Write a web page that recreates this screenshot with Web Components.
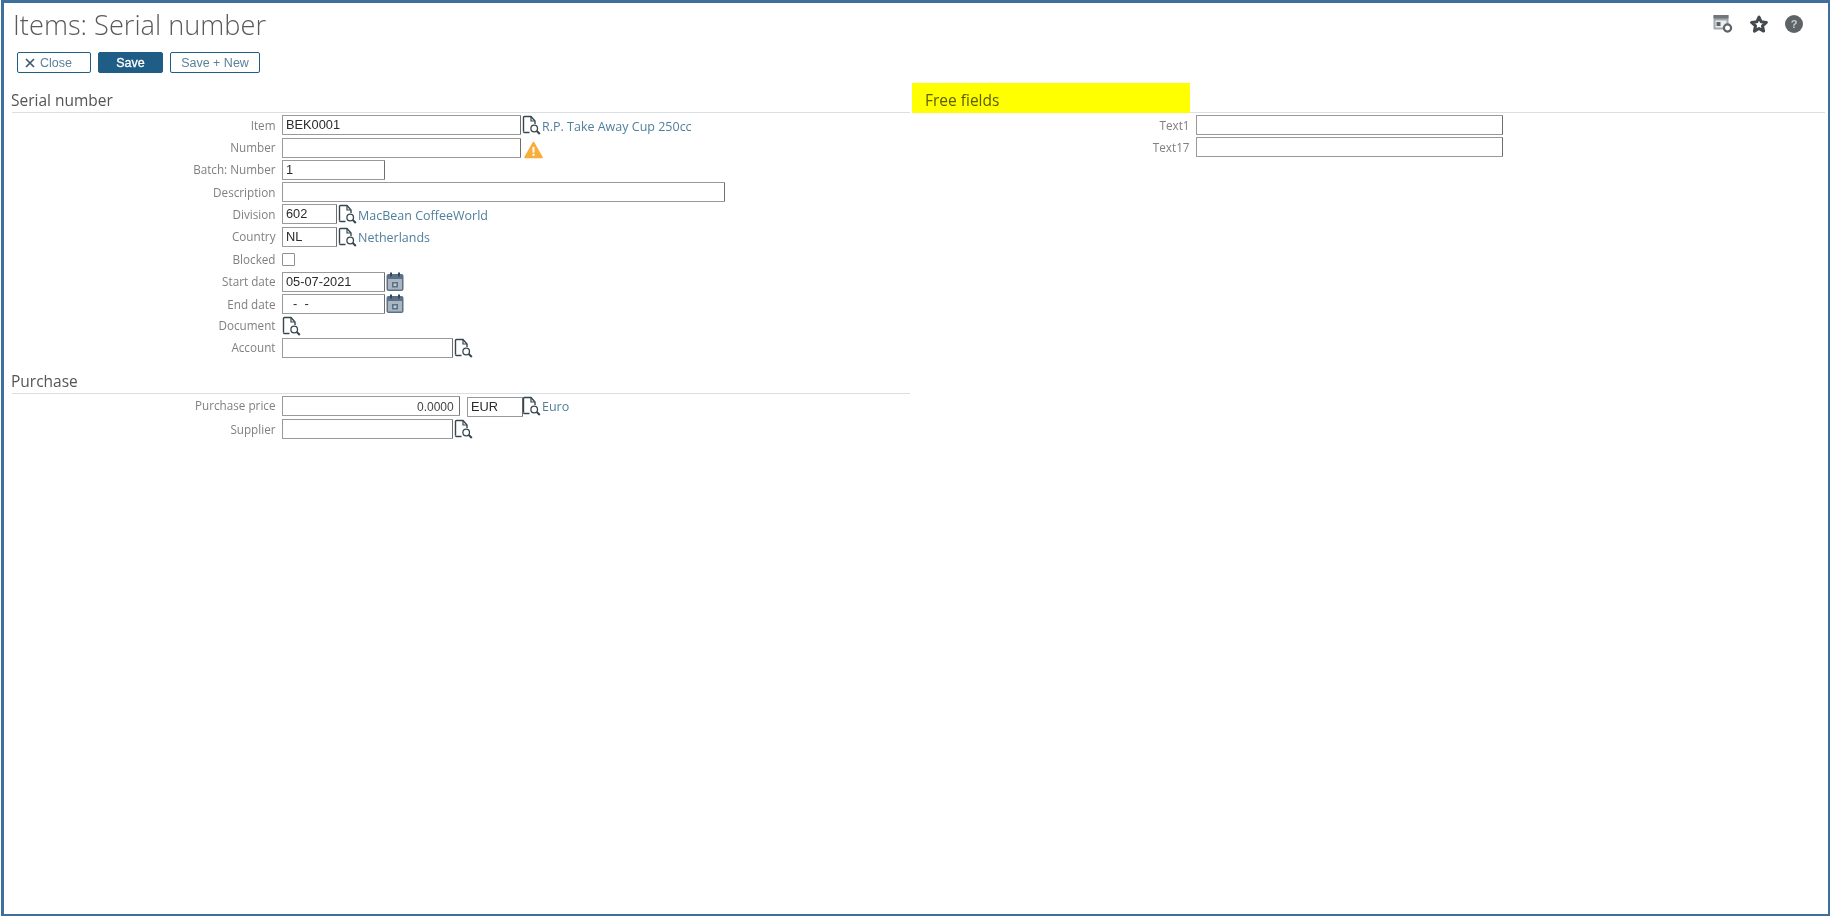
<!DOCTYPE html>
<html>
<head>
<meta charset="utf-8">
<title>Items: Serial number</title>
<style>
    html, body { margin: 0; padding: 0; background: #fff; height: 100%; overflow: hidden; }
    body { font-family: "Open Sans", sans-serif; }
</style>
</head>
<body>
<template id="lookup-tpl">
    <style>:host { display: inline-flex; width: 19px; height: 20px; flex: none; }</style>
    <svg width="19" height="20" viewBox="0 0 19 20" fill="none" stroke="#37474f" stroke-width="1.4">
        <path d="M1.5 16.5V2.5q0-1 1-1h6.5l4 4.5v3"/>
        <path d="M9 1.5v4.5h4" stroke-width="1.2"/>
        <path d="M1.5 16.5q0 1 1 1h5"/>
        <circle cx="12.2" cy="13.5" r="3.3" stroke-width="1.3"/>
        <path d="M14.8 16l3 3" stroke-width="2"/>
    </svg>
</template>
<template id="calendar-tpl">
    <style>:host { display: inline-flex; width: 18px; height: 20px; flex: none; }</style>
    <svg width="18" height="20" viewBox="0 0 18 20">
        <rect x="0.5" y="2" width="17" height="17" rx="2" fill="#5b7186"/>
        <rect x="2" y="7" width="14" height="10.5" fill="#a9b6c2"/>
        <rect x="4" y="0.5" width="2" height="4" fill="#33495e"/>
        <rect x="12" y="0.5" width="2" height="4" fill="#33495e"/>
        <rect x="6" y="10" width="6" height="5.5" fill="#5b7186"/>
        <rect x="7.6" y="11.5" width="2.8" height="2.5" fill="#c4ced6"/>
    </svg>
</template>

<serial-page></serial-page>

<script>
class LookupIcon extends HTMLElement {
    constructor() {
        super();
        this.attachShadow({ mode: 'open' });
        this.shadowRoot.appendChild(document.getElementById('lookup-tpl').content.cloneNode(true));
    }
}
customElements.define('lookup-icon', LookupIcon);

class CalendarIcon extends HTMLElement {
    constructor() {
        super();
        this.attachShadow({ mode: 'open' });
        this.shadowRoot.appendChild(document.getElementById('calendar-tpl').content.cloneNode(true));
    }
}
customElements.define('calendar-icon', CalendarIcon);

class WarningIcon extends HTMLElement {
    constructor() {
        super();
        this.attachShadow({ mode: 'open' }).innerHTML = `
            <style>:host { display: inline-flex; width: 19px; height: 18px; flex: none; margin: 4px 0 0 2px; }</style>
            <svg width="19" height="18" viewBox="0 0 19 18">
                <path d="M9.5 1.5L18 16.5H1z" fill="#f9ae3c" stroke="#f9ae3c" stroke-width="1.6" stroke-linejoin="round"/>
                <rect x="8.5" y="6" width="2" height="5.6" fill="#fff"/>
                <rect x="8.5" y="12.8" width="2" height="2" fill="#fff"/>
            </svg>`;
    }
}
customElements.define('warning-icon', WarningIcon);

class ErpButton extends HTMLElement {
    constructor() {
        super();
        this.attachShadow({ mode: 'open' }).innerHTML = `
            <style>
                :host {
                    display: inline-flex;
                    align-items: center;
                    justify-content: center;
                    box-sizing: border-box;
                    height: 21px;
                    border: 1px solid #1f5d86;
                    border-radius: 2px;
                    font: 12.5px "Liberation Sans", Arial, sans-serif;
                    color: #5d8199;
                    background: #fff;
                }
                :host([primary]) { background: #1f5d86; color: #fff; -webkit-text-stroke: 0.3px #fff; }
                :host([close]) { justify-content: flex-start; padding-left: 7px; gap: 5px; }
                svg { display: none; }
                :host([close]) svg { display: block; }
            </style>
            <svg width="10" height="10" viewBox="0 0 10 10"><path d="M1 1l8 8M9 1l-8 8" stroke="#3d5a70" stroke-width="1.7"/></svg>
            <slot></slot>`;
    }
}
customElements.define('erp-button', ErpButton);

class SectionHeader extends HTMLElement {
    constructor() {
        super();
        this.attachShadow({ mode: 'open' }).innerHTML = `
            <style>
                :host {
                    display: block;
                    box-sizing: border-box;
                    height: 30px;
                    padding-top: 6px;
                    border-bottom: 1px solid #dcdfe1;
                    font: 15.5px/22px "Open Sans", sans-serif;
                    color: #555;
                }
                .mark { display: block; margin-left: -1px; }
                :host([mark]) { padding-top: 0; }
                :host([mark]) .mark {
                    background: #ffff00;
                    width: 278px;
                    height: 30px;
                    margin: 0;
                    padding: 6px 0 0 13px;
                    box-sizing: border-box;
                    color: #5c5c00;
                }
            </style>
            <span class="mark"><slot></slot></span>`;
    }
}
customElements.define('section-header', SectionHeader);

class FormField extends HTMLElement {
    constructor() {
        super();
        this.attachShadow({ mode: 'open' }).innerHTML = `
            <style>
                :host {
                    display: grid;
                    grid-template-columns: var(--label-col, 263.5px) 1fr;
                    column-gap: 6.5px;
                    align-items: center;
                    height: 22.25px;
                }
                .label {
                    text-align: right;
                    font: 11.7px "Open Sans", sans-serif;
                    color: #808080;
                    white-space: nowrap;
                    margin-top: -1px;
                }
                .value { display: flex; align-items: center; gap: 1px; height: 100%; }
            </style>
            <div class="label"></div>
            <div class="value"><slot></slot></div>`;
    }
    connectedCallback() {
        this.shadowRoot.querySelector('.label').textContent = this.getAttribute('label');
    }
}
customElements.define('form-field', FormField);

class TextBox extends HTMLElement {
    constructor() {
        super();
        this.attachShadow({ mode: 'open' }).innerHTML = `
            <style>
                :host {
                    display: block;
                    box-sizing: border-box;
                    height: 20px;
                    padding: 0 3px;
                    flex: none;
                    border: 1px solid #999;
                    border-right-color: #6e6e6e;
                    border-radius: 1px;
                    font: 12.8px/18px "Liberation Sans", Arial, sans-serif;
                    color: #2b2b2b;
                    background: #fff;
                }
                :host([right]) { text-align: right; padding-right: 2px; font-size: 12px; line-height: 20px; color: #444; }
                slot { white-space: pre; }
            </style>
            <slot></slot>`;
    }
    connectedCallback() {
        this.style.width = this.getAttribute('w') + 'px';
    }
}
customElements.define('text-box', TextBox);

class CheckBox extends HTMLElement {
    constructor() {
        super();
        this.attachShadow({ mode: 'open' }).innerHTML = `
            <style>
                :host {
                    display: block;
                    box-sizing: border-box;
                    width: 13px;
                    height: 13px;
                    border: 1px solid #8f8f8f;
                    border-radius: 1px;
                    background: #fff;
                }
            </style>`;
    }
}
customElements.define('check-box', CheckBox);

class LinkText extends HTMLElement {
    constructor() {
        super();
        this.attachShadow({ mode: 'open' }).innerHTML = `
            <style>
                :host { display: inline-block; margin-top: 2px; font: 12.5px "Open Sans", sans-serif; color: #4f7f9b; white-space: nowrap; }
            </style>
            <slot></slot>`;
    }
}
customElements.define('link-text', LinkText);

class PageIcons extends HTMLElement {
    constructor() {
        super();
        this.attachShadow({ mode: 'open' }).innerHTML = `
            <style>
                :host { display: flex; align-items: center; gap: 17px; }
                svg { display: block; }
            </style>
            <svg width="20" height="20" viewBox="0 0 20 20">
                <rect x="0.5" y="1" width="15" height="14.5" rx="1" fill="#a3a9ae"/>
                <rect x="0.5" y="1" width="15" height="3.5" fill="#70777d"/>
                <rect x="2.5" y="6.5" width="11" height="7" fill="#eceeef"/>
                <rect x="3.5" y="8" width="4" height="4" fill="#5d6367"/>
                <circle cx="14.5" cy="14" r="3.6" fill="#fff" stroke="#5d6367" stroke-width="2.2"/>
            </svg>
            <svg width="18" height="18" viewBox="0 0 18 18">
                <path d="M9 2l2.2 4.8 5.2.6-3.9 3.5 1.1 5.2L9 13.5l-4.6 2.6 1.1-5.2-3.9-3.5 5.2-.6z" fill="#fff" stroke="#45494d" stroke-width="3" stroke-linejoin="round"/>
            </svg>
            <svg width="18" height="18" viewBox="0 0 18 18">
                <circle cx="9" cy="9" r="9" fill="#5e6366"/>
                <text x="9" y="13" text-anchor="middle" font-family="Liberation Sans, Arial, sans-serif" font-weight="700" font-size="11" fill="#c9cccd">?</text>
            </svg>`;
    }
}
customElements.define('page-icons', PageIcons);

class SerialPage extends HTMLElement {
    constructor() {
        super();
        this.attachShadow({ mode: 'open' }).innerHTML = `
            <style>
                :host {
                    display: block;
                    box-sizing: border-box;
                    width: 1829px;
                    height: 916px;
                    margin-left: 1px;
                    border: solid #3f6f9d;
                    border-width: 3px 2px 2px 3px;
                    background: #fff;
                    filter: blur(0.4px);
                }
                header {
                    display: flex;
                    justify-content: space-between;
                    height: 46px;
                    padding: 0 25px 0 9px;
                }
                h1 {
                    margin: 0;
                    font: 300 27.2px/44px "Open Sans", sans-serif;
                    color: #5a5a5a;
                }
                page-icons { margin-top: 11px; height: 20px; }
                .toolbar { display: flex; gap: 7px; padding-left: 13px; height: 34px; align-items: flex-start; padding-top: 3px; box-sizing: border-box; }
                .close { width: 74px; }
                .save { width: 65px; }
                .savenew { width: 90px; }
                .columns { display: grid; grid-template-columns: 898px 913px; column-gap: 2px; padding-left: 8px; }
                .right { --label-col: 277.5px; }
                .rows { padding-top: 1px; }
                .first { padding-top: 1.3px; }
                .purchase { margin-top: 5px; }
                .blocked { height: 23px; }
                .document { height: 21.25px; }
                .supplier { margin-top: 1px; }
                .eur { margin-top: 2px; }
                .eur-lookup { margin-left: -2px; }
            </style>
            <header>
                <h1>Items: Serial number</h1>
                <page-icons></page-icons>
            </header>
            <div class="toolbar">
                <erp-button class="close" close>Close</erp-button>
                <erp-button class="save" primary>Save</erp-button>
                <erp-button class="savenew">Save + New</erp-button>
            </div>
            <div class="columns">
                <div class="left">
                    <section-header>Serial number</section-header>
                    <div class="rows first">
                        <form-field label="Item"><text-box w="239">BEK0001</text-box><lookup-icon></lookup-icon><link-text>R.P. Take Away Cup 250cc</link-text></form-field>
                        <form-field label="Number"><text-box w="239"></text-box><warning-icon></warning-icon></form-field>
                        <form-field label="Batch: Number"><text-box w="103">1</text-box></form-field>
                        <form-field label="Description"><text-box w="443"></text-box></form-field>
                        <form-field label="Division"><text-box w="55">602</text-box><lookup-icon></lookup-icon><link-text>MacBean CoffeeWorld</link-text></form-field>
                        <form-field label="Country"><text-box w="55">NL</text-box><lookup-icon></lookup-icon><link-text>Netherlands</link-text></form-field>
                        <form-field class="blocked" label="Blocked"><check-box></check-box></form-field>
                        <form-field label="Start date"><text-box w="103">05-07-2021</text-box><calendar-icon></calendar-icon></form-field>
                        <form-field label="End date"><text-box w="103">  -  -</text-box><calendar-icon></calendar-icon></form-field>
                        <form-field class="document" label="Document"><lookup-icon></lookup-icon></form-field>
                        <form-field label="Account"><text-box w="171"></text-box><lookup-icon></lookup-icon></form-field>
                    </div>
                    <section-header class="purchase">Purchase</section-header>
                    <div class="rows">
                        <form-field label="Purchase price"><text-box w="178" right>0.0000 </text-box><span style="width:5px"></span><text-box class="eur" w="56">EUR</text-box><lookup-icon class="eur-lookup"></lookup-icon><link-text>Euro</link-text></form-field>
                        <form-field class="supplier" label="Supplier"><text-box w="171"></text-box><lookup-icon></lookup-icon></form-field>
                    </div>
                </div>
                <div class="right">
                    <section-header mark>Free fields</section-header>
                    <div class="rows">
                        <form-field label="Text1"><text-box w="307"></text-box></form-field>
                        <form-field label="Text17"><text-box w="307"></text-box></form-field>
                    </div>
                </div>
            </div>`;
    }
}
customElements.define('serial-page', SerialPage);
</script>
</body>
</html>
